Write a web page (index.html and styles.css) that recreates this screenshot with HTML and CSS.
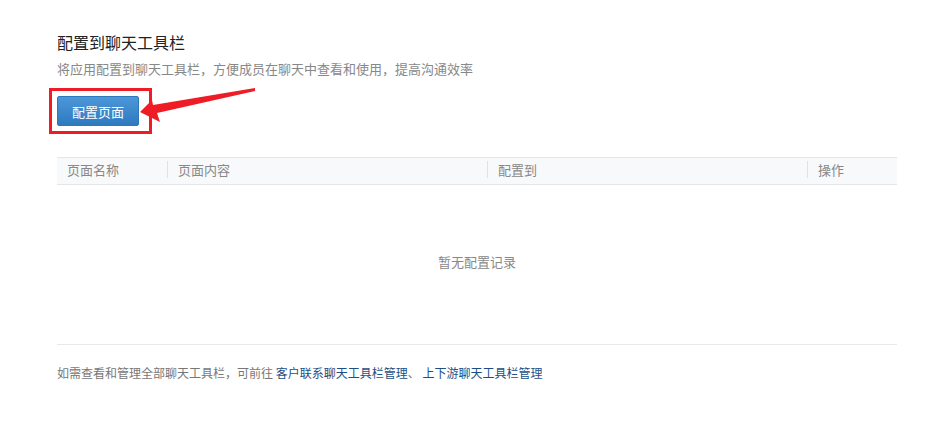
FILE: index.html
```html
<!DOCTYPE html>
<html lang="zh-CN">
<head>
    <meta charset="UTF-8">
    <meta name="viewport" content="width=device-width, initial-scale=1.0">
    <title>配置到聊天工具栏</title>
    <link rel="stylesheet" href="styles.css">
</head>
<body>

<div class="page">
    <!-- 标题 -->
    <h2 class="title">配置到聊天工具栏</h2>
    <p class="desc">将应用配置到聊天工具栏，方便成员在聊天中查看和使用，提高沟通效率</p>

    <!-- 配置按钮（带标注） -->
    <div class="btn-wrap">
        <button class="btn-primary">配置页面</button>
        <span class="mark-box"></span>
        <svg class="mark-arrow" width="122" height="40" viewBox="0 0 122 40">
            <polygon points="3,26 15,14 16,19 118,2 118,5 20,27 23,36" fill="#ee1c25"/>
        </svg>
    </div>

    <!-- 配置列表 -->
    <table class="list">
        <thead>
        <tr>
            <th class="col-name"><span>页面名称</span></th>
            <th class="col-content"><span>页面内容</span></th>
            <th class="col-target"><span>配置到</span></th>
            <th class="col-op"><span>操作</span></th>
        </tr>
        </thead>
        <tbody>
        <tr>
            <td class="empty" colspan="4">暂无配置记录</td>
        </tr>
        </tbody>
    </table>

    <p class="footer-tip">
        如需查看和管理全部聊天工具栏，可前往
        <a href="#">客户联系聊天工具栏管理</a>、&nbsp;<a href="#">上下游聊天工具栏管理</a>
    </p>
</div>

</body>
</html>
```

FILE: styles.css
```css
body {
    font-family: "Noto Sans CJK SC", "Liberation Sans", sans-serif;
    background-color: #fff;
    margin: 0;
    padding: 0;
    color: #333;
}
.page {
    width: 840px;
    padding: 31px 0 0 57px;
}
.title {
    margin: 0;
    font-size: 16px;
    line-height: 22px;
    font-weight: normal;
    color: #222;
}
.desc {
    margin: 6px 0 0;
    font-size: 13px;
    line-height: 20px;
    color: #888;
}
.btn-wrap {
    position: relative;
    margin-top: 17px;
    height: 30px;
}
.btn-primary {
    height: 30px;
    width: 82px;
    padding: 0;
    background: linear-gradient(#4b97d8, #2e7abf);
    color: #fff;
    border: 1px solid #2d78bb;
    border-radius: 2px;
    font-family: inherit;
    font-size: 13px;
    cursor: pointer;
}
.mark-box {
    position: absolute;
    left: -8px;
    top: -8px;
    width: 97px;
    height: 40px;
    border: 3px solid #ee1c25;
}
.mark-arrow {
    position: absolute;
    left: 80px;
    top: -10px;
}
.list {
    width: 840px;
    margin-top: 31px;
    border-collapse: collapse;
}
.list th {
    height: 26px;
    padding: 0;
    vertical-align: top;
    background-color: #f8f9fb;
    border-top: 1px solid #e4e6e9;
    border-bottom: 1px solid #e4e6e9;
    font-size: 13px;
    font-weight: normal;
    color: #888;
    text-align: left;
}
.list th span {
    display: block;
    margin-top: 3px;
    padding-left: 10px;
    line-height: 17px;
}
.list th + th span {
    border-left: 1px solid #e2e2e2;
}
.col-name { width: 110px; }
.col-content { width: 320px; }
.col-target { width: 320px; }
.col-op { width: 90px; }
.empty {
    height: 153px;
    padding: 0 0 6px;
    text-align: center;
    font-size: 13px;
    color: #888;
    border-bottom: 1px solid #e8e8e8;
}
.footer-tip {
    margin: 19px 0 0;
    font-size: 12px;
    line-height: 18px;
    color: #777;
}
.footer-tip a {
    color: #1b4f86;
    text-decoration: none;
}
```
